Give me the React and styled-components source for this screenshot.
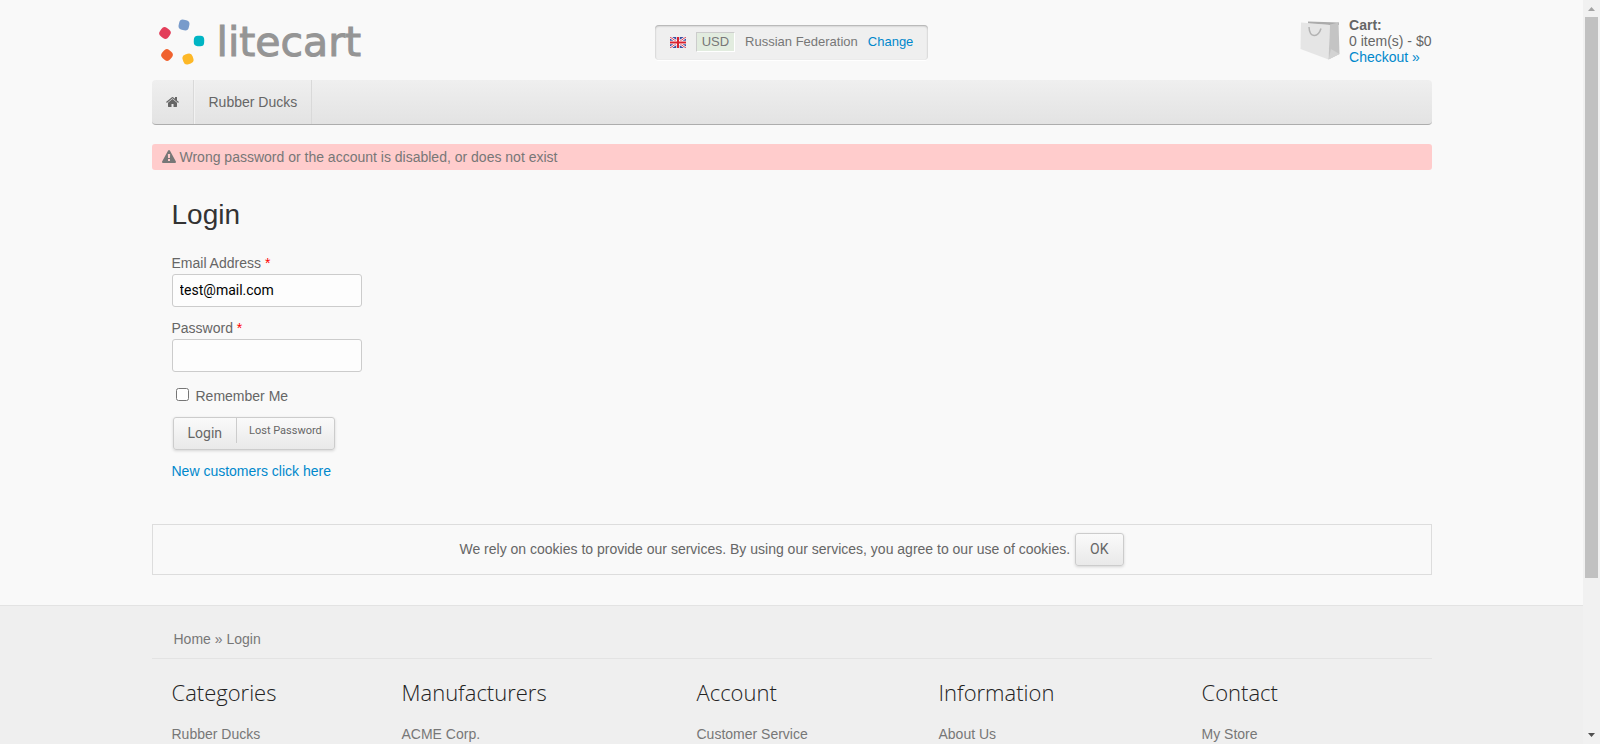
import React from 'react';
import styled, { createGlobalStyle, css } from 'styled-components';

const GlobalStyle = createGlobalStyle`
  *, *::before, *::after { box-sizing: border-box; }
  body {
    margin: 0;
    background: #f9f9f9;
    color: #666;
    font: 14px/16px "Liberation Sans", Arial, sans-serif;
  }
  h1, h2, p, ul { margin: 0; padding: 0; font-weight: normal; }
  ul { list-style: none; }
`;

const Window = styled.div`
  display: grid;
  grid-template-columns: minmax(0, 1fr) 17px;
  height: 100vh;
  overflow: hidden;
`;

const Page = styled.div`
  min-width: 0;
`;

const Container = styled.div`
  width: 100%;
  max-width: 1280px;
  margin: 0 auto;
`;

const Link = styled.a`
  color: ${(p) => (p.$muted ? '#777' : '#0088cc')};
  text-decoration: none;
`;

/* Header */

const Header = styled.header`
  display: grid;
  grid-template-columns: 1fr auto 1fr;
  align-items: center;
  height: 80px;
`;

const Logo = styled.a`
  display: flex;
  align-items: center;
  gap: 12px;
  padding: 3px 0 0 7px;
  color: #959595;
  text-decoration: none;
`;

const LogoName = styled.span`
  font: 41px/48px "DejaVu Sans", sans-serif;
  -webkit-text-stroke: 1px #959595;
`;

const Region = styled.div`
  display: flex;
  align-items: center;
  gap: 10px;
  height: 35px;
  margin-top: 4px;
  padding: 0 15px;
  border-radius: 4px;
  background: #efefef;
  box-shadow: inset 0 1px 2px rgba(0, 0, 0, 0.3), 0 1px 0 #fff;
  color: #777;
  font-size: 13px;
`;

const Currency = styled.span`
  padding: 1px 5px;
  border: 1px solid;
  border-color: #ccc #fff #fff #ccc;
  background: #e2ecdf;
`;

const Cart = styled.div`
  display: flex;
  align-items: center;
  justify-self: end;
  gap: 9px;
  padding-top: 2px;
`;

/* Navigation */

const Nav = styled.nav`
  display: flex;
  height: 45px;
  border-bottom: 1px solid #adadad;
  border-radius: 4px;
  background: linear-gradient(#efefef, #e3e3e3);
`;

const NavLink = styled.a`
  display: flex;
  align-items: center;
  padding: 0 14px;
  border-right: 1px solid #d9d9d9;
  color: #666;
  text-decoration: none;

  & + & {
    border-left: 1px solid #f2f2f2;
  }
`;

const Notice = styled.div`
  display: flex;
  align-items: center;
  gap: 4px;
  height: 26px;
  margin-top: 19px;
  padding: 0 10px;
  border-radius: 3px;
  background: #ffcccc;
  color: #777;
`;

/* Login form */

const Form = styled.form`
  display: flex;
  flex-direction: column;
  align-items: flex-start;
  padding: 29px 20px 45px;
`;

const Title = styled.h1`
  margin-bottom: 24px;
  color: #333;
  font-size: 28px;
  line-height: 32px;
`;

const Field = styled.label`
  display: block;
  margin-bottom: 13px;
`;

const Required = styled.span`
  color: #ff0000;
`;

const TextBox = styled.input`
  display: block;
  width: 190px;
  height: 33px;
  margin-top: 3px;
  padding: 0 7px 1px;
  border: 1px solid #ccc;
  border-radius: 3px;
  background: #fdfdfd;
  color: #000;
  font: 14px/16px Roboto, sans-serif;
`;

const CheckLabel = styled.label`
  display: flex;
  align-items: center;
  gap: 7px;
  margin: 3px 0 13px;
`;

const CheckBox = styled.input`
  width: 13px;
  height: 13px;
  margin: 0 0 3px 4px;
`;

const raised = css`
  border: 1px solid #ccc;
  border-radius: 3px;
  background: linear-gradient(#fafafa, #e9e9e9);
  box-shadow: 0 1px 3px rgba(0, 0, 0, 0.15);
`;

const ButtonGroup = styled.div`
  ${raised}
  display: flex;
  align-items: flex-start;
  height: 33px;
  margin: 0 0 13px 1px;
`;

const GroupButton = styled.button`
  height: ${(p) => (p.$small ? 25 : 31)}px;
  padding: ${(p) => (p.$small ? '0 12px' : '0 14px 2px')};
  border: 0;
  border-left: ${(p) => (p.$small ? '1px solid #ccc' : '0')};
  background: transparent;
  color: #666;
  font: ${(p) => (p.$small ? '11px' : '14px')}/16px Roboto, sans-serif;
`;

/* Cookie notice */

const CookieBar = styled.div`
  display: flex;
  align-items: baseline;
  justify-content: center;
  gap: 5px;
  min-height: 51px;
  margin-bottom: 30px;
  padding: 8px 0;
  border: 1px solid #ddd;
`;

const OkButton = styled.button`
  ${raised}
  height: 33px;
  padding: 0 14px 2px;
  color: #666;
  font: 14px/16px Roboto, sans-serif;
`;

/* Footer */

const Footer = styled.footer`
  min-height: 200px;
  border-top: 1px solid #e3e3e3;
  background: #efefef;
  color: #777;
`;

const Breadcrumbs = styled.nav`
  padding: 25px 22px 11px;
  border-bottom: 1px solid #e3e3e3;
`;

const Columns = styled.div`
  display: grid;
  grid-template-columns: 230fr 295fr 242fr 263fr 210fr;
  padding: 18px 20px;
`;

const ColumnTitle = styled.h2`
  margin-bottom: 19px;
  color: #222;
  font: 300 22px/30px "Open Sans", sans-serif;
`;

/* Scroll bar */

const ScrollBar = styled.div`
  display: flex;
  flex-direction: column;
  align-items: center;
  height: 100vh;
  background: #f1f1f1;
`;

const ScrollArrow = styled.svg`
  flex: none;
  width: 17px;
  height: 17px;
`;

const ScrollThumb = styled.div`
  width: 13px;
  height: calc((100vh - 34px) * 0.79);
  background: #c1c1c1;
`;

const ScrollSpace = styled.div`
  flex: 1;
`;

const logoDots = [
  ['#e33e5a', 13, 14, 35],
  ['#789bcb', 32, 6, 12],
  ['#00b5c4', 47, 22, 2],
  ['#fdb827', 36, 40, -18],
  ['#f0622f', 15, 36, 40],
];

function LogoMark() {
  return (
    <svg width="46" height="46" viewBox="7 0 46 46" aria-hidden="true">
      {logoDots.map(([fill, x, y, turn]) => (
        <rect key={fill} x={x - 5.2} y={y - 5.2} width="10.4" height="10.4" rx="4" fill={fill} transform={`rotate(${turn} ${x} ${y})`} />
      ))}
    </svg>
  );
}

function Flag() {
  return (
    <svg width="16" height="11" viewBox="0 0 16 11" role="img" aria-label="English">
      <rect width="16" height="11" fill="#3a4fa0" />
      <path d="M0 0L16 11M16 0L0 11" stroke="#fff" strokeWidth="2.4" />
      <path d="M0 0L16 11M16 0L0 11" stroke="#dc4055" strokeWidth="1" />
      <path d="M8 0V11M0 5.5H16" stroke="#fff" strokeWidth="3.4" />
      <path d="M8 0V11M0 5.5H16" stroke="#d9222f" strokeWidth="2" />
    </svg>
  );
}

function Bag() {
  return (
    <svg width="40" height="40" viewBox="0 1 40 40" aria-hidden="true">
      <path d="M8 1.5L39 2.5V5L30 5L8 4Z" fill="#ababab" />
      <path d="M1 2.5L30 5L28.5 39.5L0.5 29Z" fill="#e5e5e5" />
      <path d="M30 4.500L38.500 2.500L39.500 34L28.500 39.500Z" fill="#c4c4c4" />
      <path d="M31 29L39.500 34L28.500 39.500Z" fill="#d2d2d2" />
      <path d="M9 7C9.500 18 18 18 21 8.500" fill="none" stroke="#b3b3b3" strokeWidth="1.5" />
    </svg>
  );
}

function HomeIcon() {
  return (
    <svg width="13" height="14" viewBox="64 0 1664 1792" fill="currentColor" aria-hidden="true">
      <path d="M1472 992v480q0 26-19 45t-45 19h-384v-384h-256v384h-384q-26 0-45-19t-19-45v-480q0-1 .5-3t.5-3l575-474 575 474q1 2 1 6zm223-69l-62 74q-8 9-21 11h-3q-13 0-21-7l-692-577-692 577q-12 8-24 7-13-2-21-11l-62-74q-8-10-7-23.500t11-21.500l719-599q32-26 76-26t76 26l244 204v-195q0-14 9-23t23-9h192q14 0 23 9t9 23v408l219 182q10 8 11 21.500t-7 23.500z" />
    </svg>
  );
}

function WarningIcon() {
  return (
    <svg width="14" height="14" viewBox="0 0 1792 1792" fill="currentColor" aria-hidden="true">
      <path d="M1024 1375v-190q0-14-9.500-23.500t-22.500-9.500h-192q-13 0-22.500 9.500t-9.500 23.500v190q0 14 9.500 23.500t22.500 9.500h192q13 0 22.500-9.500t9.500-23.500zm-2-374l18-459q0-12-10-19-13-11-24-11h-220q-11 0-24 11-10 7-10 21l17 457q0 10 10 16.500t24 6.500h185q14 0 23.500-6.500t10.500-16.500zm-14-934l768 1408q35 63-2 126-17 29-46.500 46t-63.500 17h-1536q-34 0-63.500-17t-46.500-46q-37-63-2-126l768-1408q17-31 47-49t65-18 65 18 47 49z" />
    </svg>
  );
}

const footerColumns = [
  ['Categories', 'Rubber Ducks'],
  ['Manufacturers', 'ACME Corp.'],
  ['Account', 'Customer Service'],
  ['Information', 'About Us'],
  ['Contact', 'My Store'],
];

export default function App() {
  return (
    <Window>
      <GlobalStyle />
      <Page>
        <Container>
          <Header>
            <Logo href="#">
              <LogoMark />
              <LogoName>litecart</LogoName>
            </Logo>
            <Region>
              <Flag />
              <Currency>USD</Currency>
              <span>Russian Federation</span>
              <Link href="#">Change</Link>
            </Region>
            <Cart>
              <Bag />
              <div>
                <strong>Cart:</strong>
                <div>0 item(s) - $0</div>
                <Link href="#">Checkout »</Link>
              </div>
            </Cart>
          </Header>
          <Nav>
            <NavLink href="#" aria-label="Home"><HomeIcon /></NavLink>
            <NavLink href="#">Rubber Ducks</NavLink>
          </Nav>
          <Notice role="alert">
            <WarningIcon />
            Wrong password or the account is disabled, or does not exist
          </Notice>
          <Form onSubmit={(e) => e.preventDefault()}>
            <Title>Login</Title>
            <Field>
              Email Address <Required>*</Required>
              <TextBox type="email" defaultValue="test@mail.com" />
            </Field>
            <Field>
              Password <Required>*</Required>
              <TextBox type="password" />
            </Field>
            <CheckLabel>
              <CheckBox type="checkbox" />
              Remember Me
            </CheckLabel>
            <ButtonGroup>
              <GroupButton type="submit">Login</GroupButton>
              <GroupButton type="button" $small>Lost Password</GroupButton>
            </ButtonGroup>
            <Link href="#">New customers click here</Link>
          </Form>
          <CookieBar>
            <p>We rely on cookies to provide our services. By using our services, you agree to our use of cookies.</p>
            <OkButton type="button">OK</OkButton>
          </CookieBar>
        </Container>
        <Footer>
          <Container>
            <Breadcrumbs>
              <Link $muted href="#">Home</Link> » <Link $muted href="#">Login</Link>
            </Breadcrumbs>
            <Columns>
              {footerColumns.map(([title, item]) => (
                <section key={title}>
                  <ColumnTitle>{title}</ColumnTitle>
                  <ul>
                    <li><Link $muted href="#">{item}</Link></li>
                  </ul>
                </section>
              ))}
            </Columns>
          </Container>
        </Footer>
      </Page>
      <ScrollBar aria-hidden="true">
        <ScrollArrow viewBox="0 0 17 17"><path d="M5 11L8.500 7L12 11Z" fill="#a3a3a3" /></ScrollArrow>
        <ScrollThumb />
        <ScrollSpace />
        <ScrollArrow viewBox="0 0 17 17"><path d="M5 6L8.500 10L12 6Z" fill="#505050" /></ScrollArrow>
      </ScrollBar>
    </Window>
  );
}
